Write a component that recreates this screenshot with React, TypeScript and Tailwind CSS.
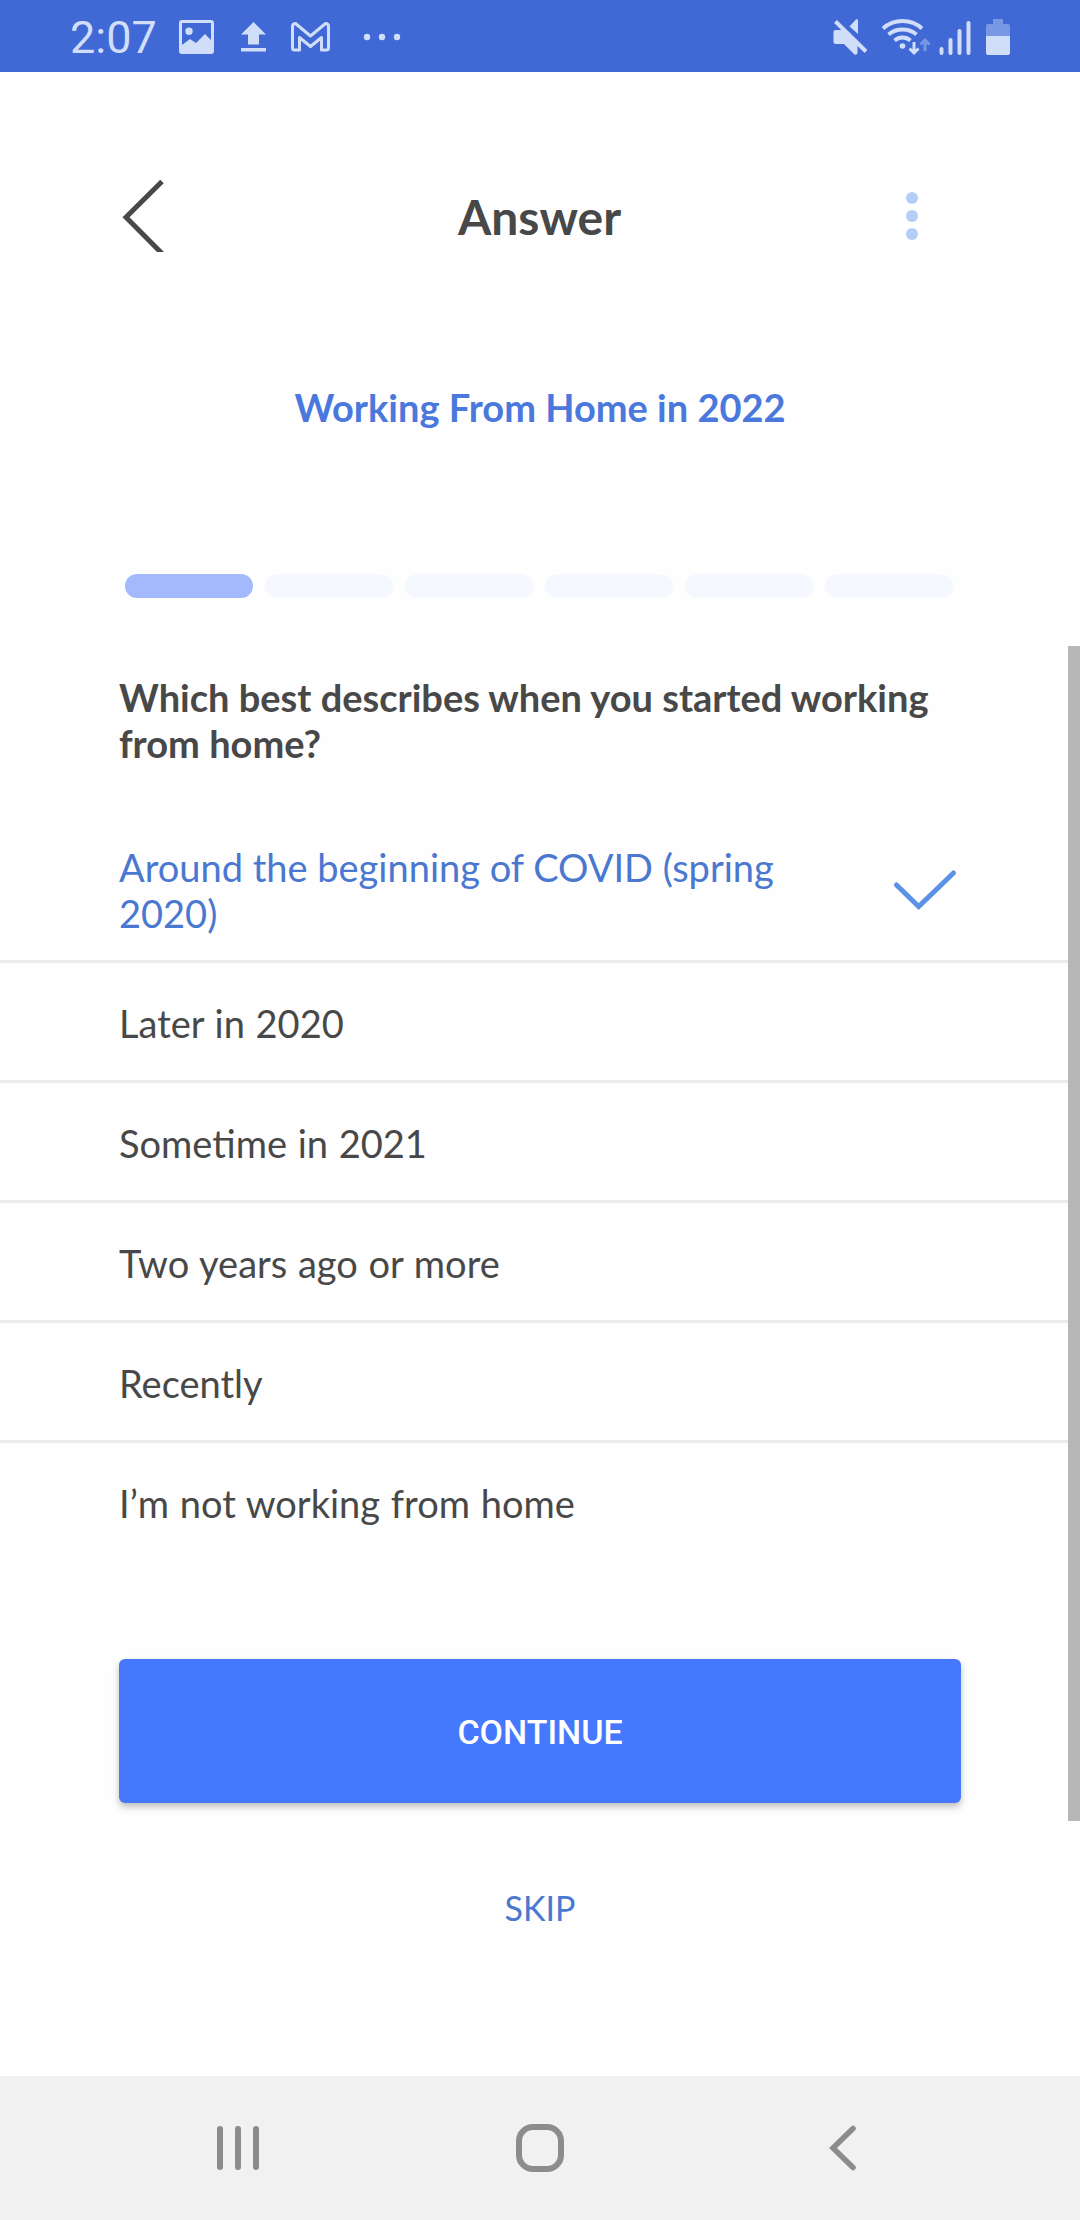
const options = [
  "Later in 2020",
  "Sometime in 2021",
  "Two years ago or more",
  "Recently",
  "I’m not working from home",
];

const steps = [1, 2, 3, 4, 5, 6];

function StatusBar() {
  return (
    <div className="flex h-[72px] shrink-0 items-start justify-between bg-[#4069d5] pl-[70px] pr-[70px] text-[#d0defa]">
      <div className="flex items-start">
        <span className="mt-[11px] w-[100px] font-[Roboto] text-[45px] leading-[54px]">
          2:07
        </span>
        <svg width="240" height="72" viewBox="170 0 240 72" fill="currentColor">
          <path
            fillRule="evenodd"
            d="M182 20h29a3 3 0 0 1 3 3v28a3 3 0 0 1-3 3h-29a3 3 0 0 1-3-3V23a3 3 0 0 1 3-3zM182 23v22l8-6 6 4 9-9 6 6V23zM189 27.500a3.700 3.700 0 1 1 0 7.400a3.700 3.700 0 1 1 0-7.400z"
          />
          <path d="M253.500 22l12.500 12.500h-7v10h-11v-10h-7zM241 48h25v3.500h-25z" />
          <path
            d="M292.500 48V26.500q0-3 3-3l15 12.500 15-12.500q3 0 3 3V48q0 2-2 2h-5V37.500l-11 9-11-9V50h-5q-2 0-2-2z"
            fill="none"
            stroke="currentColor"
            strokeWidth="3"
            strokeLinejoin="round"
          />
          <circle cx="367" cy="37" r="3.200" />
          <circle cx="382" cy="37" r="3.200" />
          <circle cx="397" cy="37" r="3.200" />
        </svg>
      </div>

      <svg width="180" height="72" viewBox="830 0 180 72" fill="currentColor">
        <path d="M835.500 30H844l13.500 14v9.500q-1 1.500-3 1L844 44h-8.500q-2 0-2-2V32q0-2 2-2zM849.500 26.500l6.500-7q2-1 2 1v13.500z" />
        <path d="M835.500 21.500L866 51.500" stroke="currentColor" strokeWidth="4" fill="none" />
        <g fill="none" stroke="currentColor" strokeWidth="3.800">
          <path d="M883 28.500q8-7.500 19.500-7.500t19.500 7.500" />
          <path d="M888.500 34.500q6-5 14-5t14 5" />
          <path d="M894.500 40.500q3.500-3 8-3t8 3" />
          <path d="M914 42v11M909.500 48.500l4.500 4.500 4.500-4.500" strokeWidth="3" />
          <path d="M925 51V40M920.500 44.500l4.500-4.500 4.500 4.500" strokeWidth="3" opacity=".4" />
        </g>
        <circle cx="902.500" cy="46" r="2.800" />
        <g stroke="currentColor" strokeWidth="4" strokeLinecap="round">
          <path d="M941.500 49v4M950.500 40v13M959.500 31v22M968.500 23v30" />
        </g>
        <path d="M986 36V26q0-2 2-2h5v-5h10v5h5q2 0 2 2v10z" opacity=".4" />
        <path d="M986 36h24v17q0 2-2 2h-20q-2 0-2-2z" />
      </svg>
    </div>
  );
}

function Header() {
  return (
    <header className="flex h-[108px] items-start justify-between pl-[120px] pr-[160px]">
      <svg className="w-[48px]" height="72" viewBox="120 180 48 72">
        <path d="M162 181.500L126 217.300L162 253.500" fill="none" stroke="#484848" strokeWidth="5" />
      </svg>
      <h1 className="ml-[7px] pt-[8px] text-[48px] font-bold leading-[58px] text-[#484848]">
        Answer
      </h1>
      <div className="flex w-[16px] flex-col items-center gap-[6px] pt-[12px]">
        <span className="h-3 w-3 rounded-full bg-[#b4cff7]" />
        <span className="h-3 w-3 rounded-full bg-[#b4cff7]" />
        <span className="h-3 w-3 rounded-full bg-[#b4cff7]" />
      </div>
    </header>
  );
}

function NavBar() {
  return (
    <nav className="flex h-[144px] shrink-0 items-center justify-between bg-[#f1f1f1] pl-[215px] pr-[222px]">
      <svg width="46" height="48" viewBox="215 2124 46 48">
        <path
          d="M220 2129v38M238 2129v38M256 2129v38"
          stroke="#8c8c8c"
          strokeWidth="6"
          strokeLinecap="round"
        />
      </svg>
      <span className="mr-[7px] h-[48px] w-[48px] rounded-[17px] border-[6px] border-[#8c8c8c]" />
      <svg width="32" height="48" viewBox="826 2124 32 48">
        <path
          d="M853 2128.500L833 2148L853 2167.500"
          fill="none"
          stroke="#8c8c8c"
          strokeWidth="5.500"
          strokeLinecap="round"
        />
      </svg>
    </nav>
  );
}

export default function App() {
  return (
    <div className="relative flex h-[2220px] w-[1080px] flex-col overflow-hidden bg-[#fefefe] font-[Lato,sans-serif] text-[#484848]">
      <StatusBar />

      <main className="flex flex-1 flex-col pt-[108px]">
        <Header />

        <h2 className="mt-[96px] text-center text-[38px] font-bold leading-[46px] text-[#4a78dc]">
          Working From Home in 2022
        </h2>

        <div className="mt-[144px] flex gap-3 pl-[125px]">
          {steps.map((step) => (
            <span
              key={step}
              className={
                step === 1
                  ? "h-6 w-[128px] rounded-full bg-[#a3b9fb]"
                  : "h-6 w-[128px] rounded-full bg-[#f6f8ff]"
              }
            />
          ))}
        </div>

        <p className="mt-[76px] w-[960px] pl-[119px] text-[38px] font-bold leading-[46px]">
          Which best describes when you started working from home?
        </p>

        <div className="mt-[78px] flex h-[119px] items-start justify-between border-b-[3px] border-[#ebebeb] pl-[119px] pr-[119px]">
          <p className="w-[700px] text-[38px] leading-[46px] text-[#4a78d0]">
            Around the beginning of COVID (spring 2020)
          </p>
          <svg className="mt-[22px]" width="70" height="48" viewBox="891 866 70 48">
            <path
              d="M896.500 885L918.700 906.500L953.500 873"
              fill="none"
              stroke="#5b92e5"
              strokeWidth="5"
              strokeLinecap="round"
            />
          </svg>
        </div>

        <ul>
          {options.map((option) => (
            <li
              key={option}
              className="flex h-[120px] items-center border-b-[3px] border-[#ebebeb] pl-[119px] pt-[3px] text-[38px] leading-[46px] [word-spacing:1px] last:border-transparent"
            >
              {option}
            </li>
          ))}
        </ul>

        <button className="mx-[119px] mt-[96px] h-[144px] rounded-md bg-[#4578fc] pt-[3px] font-[Roboto] text-[34px] font-medium text-white shadow-[0_4px_7px_rgba(0,0,0,0.25)]">
          CONTINUE
        </button>
        <button className="mt-[84px] text-[34px] leading-[42px] text-[#4a78d0]">
          SKIP
        </button>
      </main>

      <NavBar />

      {/* scroll thumb over the page edge */}
      <div className="absolute right-0 top-[646px] h-[1175px] w-3 bg-[#b7b7b7]" />
    </div>
  );
}
